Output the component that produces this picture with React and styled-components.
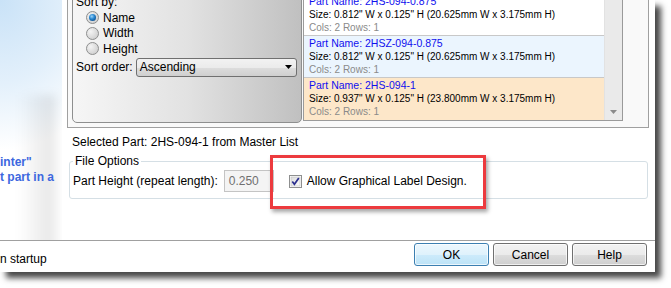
import React from "react";
import styled, { createGlobalStyle } from "styled-components";

const Global = createGlobalStyle`
  html, body { margin: 0; padding: 0; background: #fff; overflow: hidden; }
  body { font-family: "Liberation Sans", Arial, sans-serif; font-size: 12px; color: #000; }
`;

const Page = styled.div`
  width: 671px;
  height: 288px;
  overflow: hidden;
  background: #fff;
`;

const Frame = styled.div`
  position: relative;
  width: 655px;
  height: 272px;
  background: #fff;
  box-shadow: 6px 6px 6px rgba(0, 0, 0, 0.72);
  display: flex;
  flex-direction: column;
`;

const TopArea = styled.div`
  height: 240px;
  display: flex;
`;

const LeftStrip = styled.div`
  position: relative;
  width: 62px;
  flex: none;
  background: radial-gradient(ellipse 130px 150px at 0 0, #c9e2f7 0%, #e3f0fb 55%, #ffffff 100%);
  overflow: hidden;
`;

const StripShade = styled.div`
  position: absolute;
  left: 18px;
  width: 40px;
  top: 95px;
  bottom: -10px;
  background: linear-gradient(to right, rgba(0,0,0,0), rgba(0,0,0,0.09) 80%, rgba(0,0,0,0.04));
  filter: blur(5px);
`;

const StripText = styled.div`
  position: relative;
  margin-top: 155px;
  font-weight: bold;
  font-size: 12px;
  line-height: 15px;
  color: #3d68df;
  white-space: nowrap;
`;

const Main = styled.div`
  flex: 1;
  display: flex;
  flex-direction: column;
  min-width: 0;
`;

const ListGroup = styled.div`
  margin: -8px 6px 0 5px;
  border: 1px solid #a0a0a0;
  background: #f9f9f9;
  padding: 0 0 4px 4px;
  display: flex;
  gap: 1px;
`;

const SortPanel = styled.div`
  width: 230px;
  flex: none;
  box-sizing: border-box;
  border: 1px solid #8e8f8f;
  border-radius: 0 0 5px 5px;
  background: linear-gradient(to right, #f6f6f6 0%, #e2e2e2 50%, #c0c0c0 100%);
  padding: 0 3px;
  display: flex;
  flex-direction: column;
  white-space: nowrap;
`;

const PanelLabel = styled.div`
  line-height: 16px;
`;

const RadioRow = styled.label`
  display: flex;
  align-items: center;
  gap: 4px;
  height: 15.5px;
  padding-left: 10px;
`;

const SortOrderRow = styled.div`
  display: flex;
  align-items: center;
  gap: 3px;
  margin-top: 1px;
`;

const Select = styled.div`
  flex: 1;
  margin-right: 1px;
  height: 19px;
  box-sizing: border-box;
  border: 1px solid #707070;
  border-radius: 3px;
  background: linear-gradient(#f2f2f2 0%, #ebebeb 50%, #dddddd 51%, #cfcfcf 100%);
  display: flex;
  align-items: center;
  justify-content: space-between;
  padding: 0 4px 0 3px;
`;

const PartList = styled.div`
  width: 320px;
  flex: none;
  box-sizing: border-box;
  border: 1px solid #9a9a9a;
  background: #fff;
  margin-bottom: 2px;
  display: flex;
  font-family: "Liberation Sans", Tahoma, sans-serif;
  font-size: 10px;
`;

const Items = styled.div`
  flex: 1;
  display: flex;
  flex-direction: column;
`;

const Item = styled.div`
  height: 42px;
  box-sizing: border-box;
  padding: 1px 5px;
  line-height: 13px;
  background: ${(p) => p.$bg};
  border-bottom: ${(p) => (p.$last ? "none" : "1px solid #c8c8c8")};
  white-space: nowrap;
`;

const PartName = styled.div`
  color: #1010ee;
  font-size: 10.5px;
`;

const PartSize = styled.div`
  color: #000;
`;

const PartCols = styled.div`
  color: #8a8a8a;
`;

const ScrollBar = styled.div`
  width: 17px;
  background: #eaeaea;
  border-left: 1px solid #e2e2e2;
  display: flex;
  flex-direction: column;
  justify-content: flex-end;
  align-items: center;
  padding-bottom: 6px;
`;

const SelectedText = styled.div`
  margin: 6px 0 0 10px;
  line-height: 16px;
`;

const Fieldset = styled.fieldset`
  margin: 3px 7px 0 7px;
  padding: 1px 3px 6px 3px;
  border: 1px solid #d5dfe5;
  border-radius: 3px;
  min-width: 0;
`;

const Legend = styled.legend`
  padding: 0 2px;
  line-height: 16px;
`;

const FieldRow = styled.div`
  display: flex;
  align-items: center;
  height: 22px;
  white-space: nowrap;
`;

const FieldLabel = styled.span`
  margin-right: 6px;
`;

const Input = styled.div`
  width: 50px;
  height: 22px;
  box-sizing: border-box;
  border: 1px solid #c4c4c4;
  background: #f4f4f4;
  color: #707070;
  display: flex;
  align-items: center;
  padding-left: 4px;
`;

const CheckRow = styled.label`
  display: flex;
  align-items: center;
  gap: 5px;
  margin-left: 15px;
`;

const BottomBar = styled.div`
  flex: 1;
  border-top: 1px solid #a0a0a0;
  display: flex;
  justify-content: space-between;
  padding-right: 8px;
`;

const StartupText = styled.div`
  margin-top: 10px;
  line-height: 16px;
`;

const Buttons = styled.div`
  display: flex;
  gap: 4px;
  margin-top: 2px;
  align-self: flex-start;
`;

const Button = styled.div`
  width: 75px;
  height: 23px;
  box-sizing: border-box;
  border: 1px solid ${(p) => (p.$primary ? "#3c7fb1" : "#707070")};
  border-radius: 3px;
  background: ${(p) =>
    p.$primary
      ? "linear-gradient(#ecf7fd 0%, #dff2fc 50%, #cdebfb 51%, #bde3f7 100%)"
      : "linear-gradient(#f2f2f2 0%, #ebebeb 50%, #dddddd 51%, #cfcfcf 100%)"};
  box-shadow: inset 0 0 0 1px rgba(255,255,255,0.7);
  display: flex;
  align-items: center;
  justify-content: center;
`;

const Annotation = styled.div`
  position: absolute;
  left: 270px;
  top: 155px;
  width: 216px;
  height: 54px;
  box-sizing: border-box;
  border: 3px solid #ec3a3e;
  box-shadow: 2px 3px 4px rgba(0, 0, 0, 0.35);
  pointer-events: none;
`;

const Radio = ({ checked }) => (
  <svg width="13" height="13" viewBox="0 0 13 13">
    <defs>
      <radialGradient id="rg" cx="0.35" cy="0.35" r="0.7">
        <stop offset="0" stopColor="#f4f4f4" />
        <stop offset="1" stopColor="#cfcfcf" />
      </radialGradient>
      <radialGradient id="rb" cx="0.4" cy="0.35" r="0.7">
        <stop offset="0" stopColor="#9fd4f7" />
        <stop offset="0.5" stopColor="#2b8ad3" />
        <stop offset="1" stopColor="#0c4f8f" />
      </radialGradient>
    </defs>
    <circle cx="6.5" cy="6.5" r="6" fill="url(#rg)" stroke="#8e8f8f" strokeWidth="1" />
    {checked && <circle cx="6.5" cy="6.5" r="3.5" fill="url(#rb)" />}
  </svg>
);

const Check = () => (
  <svg width="13" height="13" viewBox="0 0 13 13">
    <defs>
      <linearGradient id="cg" x1="0" y1="0" x2="1" y2="1">
        <stop offset="0" stopColor="#dcdcdc" />
        <stop offset="1" stopColor="#fbfbfb" />
      </linearGradient>
    </defs>
    <rect x="0.5" y="0.5" width="12" height="12" fill="#fff" stroke="#8e8f8f" />
    <rect x="2" y="2" width="9" height="9" fill="url(#cg)" stroke="#c0c0c0" strokeWidth="0.6" />
    <path d="M3.3 6.4 L5.4 9.2 L9.8 3" fill="none" stroke="#2b2f8f" strokeWidth="1.7" />
  </svg>
);

const Arrow = ({ color = "#000", w = 7, h = 4 }) => (
  <svg width={w} height={h} viewBox={`0 0 ${w} ${h}`}>
    <path d={`M0 0 L${w} 0 L${w / 2} ${h} Z`} fill={color} />
  </svg>
);

const parts = [
  { name: "2HS-094-0.875", size: "0.812\" W x 0.125\" H (20.625mm W x 3.175mm H)", bg: "#ffffff" },
  { name: "2HSZ-094-0.875", size: "0.812\" W x 0.125\" H (20.625mm W x 3.175mm H)", bg: "#ebf5fe" },
  { name: "2HS-094-1", size: "0.937\" W x 0.125\" H (23.800mm W x 3.175mm H)", bg: "#fde7c9" },
];

export default function App() {
  return (
    <Page>
      <Global />
      <Frame>
        <TopArea>
          <LeftStrip>
            <StripShade />
            <StripText>
              <div>inter"</div>
              <div>t part in a</div>
            </StripText>
          </LeftStrip>
          <Main>
            <ListGroup>
              <SortPanel>
                <PanelLabel>Sort by:</PanelLabel>
                <RadioRow><Radio checked />Name</RadioRow>
                <RadioRow><Radio />Width</RadioRow>
                <RadioRow><Radio />Height</RadioRow>
                <SortOrderRow>
                  Sort order:
                  <Select>
                    <span>Ascending</span>
                    <Arrow />
                  </Select>
                </SortOrderRow>
              </SortPanel>
              <PartList>
                <Items>
                  {parts.map((p, i) => (
                    <Item key={p.name} $bg={p.bg} $last={i === parts.length - 1}>
                      <PartName>Part Name: {p.name}</PartName>
                      <PartSize>Size: {p.size}</PartSize>
                      <PartCols>Cols: 2 Rows: 1</PartCols>
                    </Item>
                  ))}
                </Items>
                <ScrollBar>
                  <Arrow color="#8a8a8a" w={7} h={4} />
                </ScrollBar>
              </PartList>
            </ListGroup>
            <SelectedText>Selected Part: 2HS-094-1 from Master List</SelectedText>
            <Fieldset>
              <Legend>File Options</Legend>
              <FieldRow>
                <FieldLabel>Part Height (repeat length):</FieldLabel>
                <Input>0.250</Input>
                <CheckRow><Check />Allow Graphical Label Design.</CheckRow>
              </FieldRow>
            </Fieldset>
          </Main>
        </TopArea>
        <BottomBar>
          <StartupText>n startup</StartupText>
          <Buttons>
            <Button $primary>OK</Button>
            <Button>Cancel</Button>
            <Button>Help</Button>
          </Buttons>
        </BottomBar>
        <Annotation />
      </Frame>
    </Page>
  );
}
